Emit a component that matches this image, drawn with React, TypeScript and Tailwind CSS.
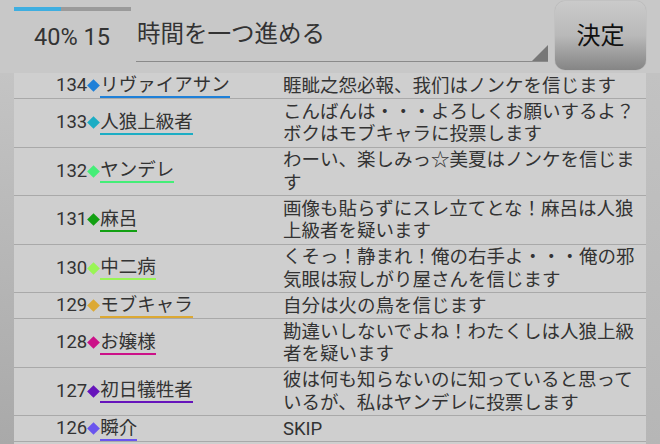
import React from "react";

type Row = { n: number; name: string; color: string; msg: string };

const rows: Row[] = [
  { n: 134, name: "リヴァイアサン", color: "#1f80d8", msg: "睚眦之怨必報、我们はノンケを信じます" },
  { n: 133, name: "人狼上級者", color: "#1cadc4", msg: "こんばんは・・・よろしくお願いするよ？ボクはモブキャラに投票します" },
  { n: 132, name: "ヤンデレ", color: "#44ee77", msg: "わーい、楽しみっ☆美夏はノンケを信じます" },
  { n: 131, name: "麻呂", color: "#13a013", msg: "画像も貼らずにスレ立てとな！麻呂は人狼上級者を疑います" },
  { n: 130, name: "中二病", color: "#99f555", msg: "くそっ！静まれ！俺の右手よ・・・俺の邪気眼は寂しがり屋さんを信じます" },
  { n: 129, name: "モブキャラ", color: "#dca934", msg: "自分は火の鳥を信じます" },
  { n: 128, name: "お嬢様", color: "#cc1188", msg: "勘違いしないでよね！わたくしは人狼上級者を疑います" },
  { n: 127, name: "初日犠牲者", color: "#6614bb", msg: "彼は何も知らないのに知っていると思っているが、私はヤンデレに投票します" },
  { n: 126, name: "瞬介", color: "#6a55ee", msg: "SKIP" },
];

export default function App() {
  return (
    <div
      className="w-[660px] h-[444px] overflow-hidden bg-[#c8c8c8] text-[#333] flex flex-col"
      style={{ fontFamily: "Roboto, 'Noto Sans CJK JP', sans-serif" }}
    >
      {/* header */}
      <div className="h-[73px] flex shrink-0">
        <div className="w-[122px] ml-[14px] shrink-0 flex flex-col">
          <div className="mt-[7px] h-[4px] w-[117px] bg-[#9a9a9a] flex">
            <div className="w-[47px] h-full bg-[#3eaee0]" />
          </div>
          <div className="mt-[12px] pl-[20px] text-[23.5px] leading-[28px] whitespace-nowrap">40% 15</div>
        </div>
        <div className="w-[412px] shrink-0 flex flex-col">
          <div className="relative mt-[19px] h-[43px] border-b border-[#8a8a8a] pl-[1px] text-[23.5px] leading-[30px]">
            時間を一つ進める
            <svg className="absolute right-0 bottom-0" width="16" height="16" viewBox="0 0 16 16">
              <polygon points="16,0 16,16 0,16" fill="#777" />
            </svg>
          </div>
        </div>
        <div className="ml-[7px] mt-[1px] w-[91px] h-[69px] rounded-[10px] bg-linear-to-b from-[#cacaca] via-[#b9b9b9] to-[#858585] flex items-center justify-center text-[24px] text-[#111] shadow-[0_0_1px_rgba(0,0,0,0.3)]">
          決定
        </div>
      </div>
      {/* body */}
      <div className="flex flex-1 min-h-0">
        <div className="w-[14px] shrink-0 bg-linear-to-b from-[#c4c4c4] to-[#a9a9a9]" />
        <div className="w-[632px] shrink-0 bg-[#cfcfcf] flex flex-col">
          {rows.map((r) => (
            <div key={r.n} className="flex border-b border-[#a9a9a9]">
              <div className="w-[269px] shrink-0 flex items-center pl-[42px]">
                <span className="text-[18.5px] leading-[22px] pb-[1px]">{r.n}</span>
                <span className="w-[13px] flex items-center justify-center">
                  <span className="w-[9px] h-[9px] rotate-45" style={{ backgroundColor: r.color }} />
                </span>
                <span
                  className="text-[18.5px] leading-[22px] border-b-2 whitespace-nowrap"
                  style={{ borderColor: r.color }}
                >
                  {r.name}
                </span>
              </div>
              <div className="w-[356px] shrink-0 pt-[1.5px] pb-[1px] text-[18.5px] leading-[22.5px]">{r.msg}</div>
            </div>
          ))}
        </div>
        <div className="w-[14px] shrink-0 bg-linear-to-b from-[#c2c2c2] to-[#b6b6b6]" />
      </div>
    </div>
  );
}
